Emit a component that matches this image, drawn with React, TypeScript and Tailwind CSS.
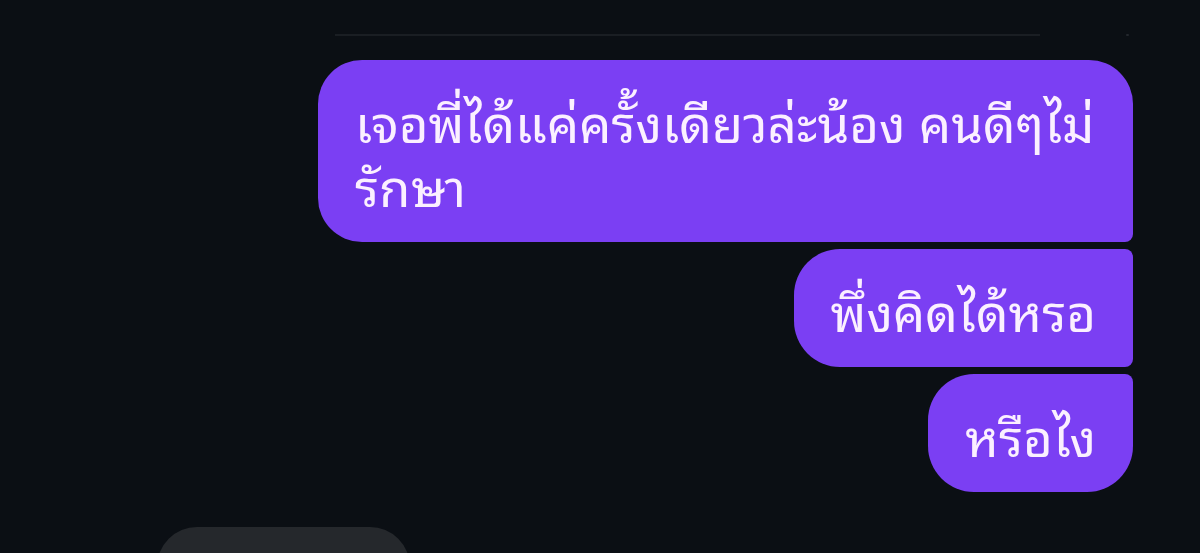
import React from "react";

const messages = [
  { id: 1, text: "เจอพี่ได้แค่ครั้งเดียวล่ะน้อง คนดีๆไม่รักษา", corners: "rounded-[44px] rounded-br-[8px]" },
  { id: 2, text: "พึ่งคิดได้หรอ", corners: "rounded-[46px] rounded-tr-[8px] rounded-br-[8px]" },
  { id: 3, text: "หรือไง", corners: "rounded-[46px] rounded-tr-[8px]" },
];

export default function App() {
  return (
    <div
      className="h-[553px] w-[1200px] overflow-hidden bg-[#0b0f14]"
      style={{ fontFamily: '"Noto Sans Thai Looped", Loma, Garuda, "Noto Sans", "DejaVu Sans", sans-serif' }}
    >
      {/* divider from previous block */}
      <div className="ml-[335px] pt-[34px] flex items-center">
        <div className="h-[2px] w-[705px] bg-[#1a1e23]" />
        <div className="ml-[86px] h-[2px] w-[3px] rounded-full bg-[#23272c]" />
      </div>

      {/* outgoing messages */}
      <div className="mt-[24px] flex flex-col items-end gap-[7px] pr-[67px]">
        {messages.map((m) => (
          <div
            key={m.id}
            className={`max-w-[815px] bg-[#7b3ff3] px-[37px] pt-[28px] pb-[26px] text-[51px] leading-[64px] text-[#fbf0ff] ${m.corners}`}
          >
            {m.text}
          </div>
        ))}
      </div>

      {/* incoming bubble peeking at the bottom */}
      <div className="ml-[157px] mt-[35px] h-[60px] w-[253px] rounded-t-[40px] bg-[#25282c]" />
    </div>
  );
}
